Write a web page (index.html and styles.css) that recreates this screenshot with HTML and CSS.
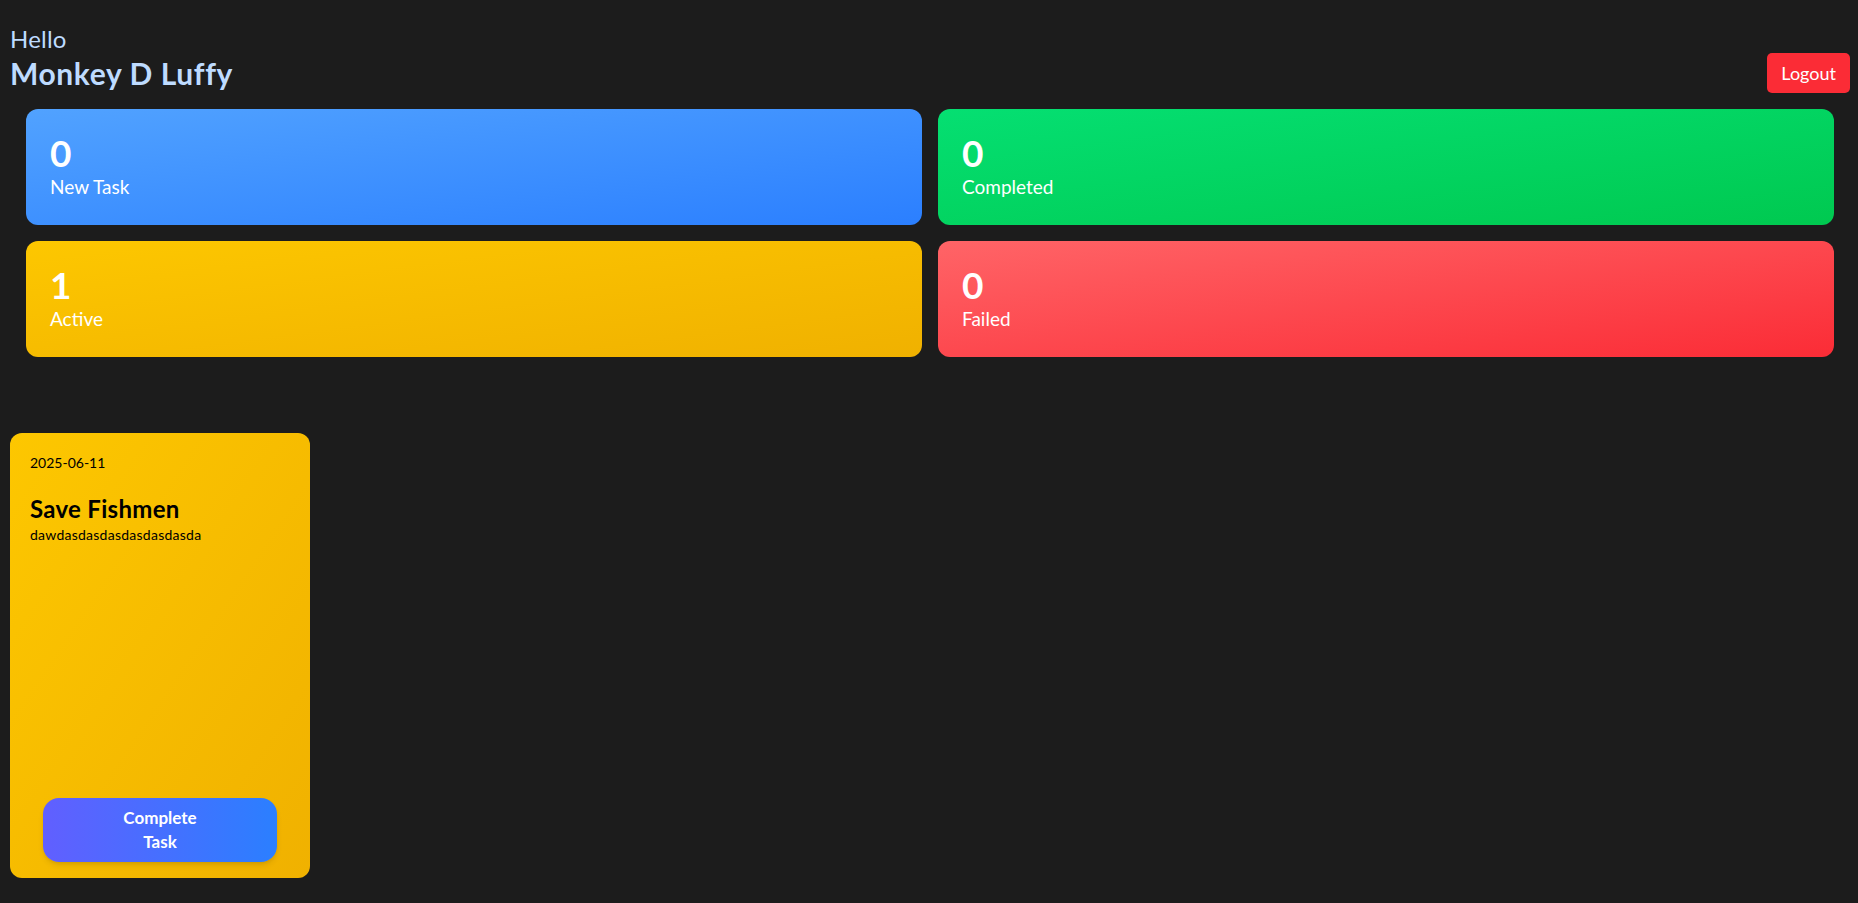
FILE: index.html
```html
<!DOCTYPE html>
<html lang="en">
<head>
<meta charset="utf-8">
<title>Employee Dashboard</title>
<link rel="stylesheet" href="styles.css">
</head>
<body>
<div class="page">
  <header class="header">
    <div class="greeting">
      <div class="hello">Hello</div>
      <h1 class="name">Monkey D Luffy</h1>
    </div>
    <button class="logout">Logout</button>
  </header>

  <section class="stats">
    <div class="stat stat-blue">
      <div class="stat-num">0</div>
      <div class="stat-label">New Task</div>
    </div>
    <div class="stat stat-green">
      <div class="stat-num">0</div>
      <div class="stat-label">Completed</div>
    </div>
    <div class="stat stat-yellow">
      <div class="stat-num">1</div>
      <div class="stat-label">Active</div>
    </div>
    <div class="stat stat-red">
      <div class="stat-num">0</div>
      <div class="stat-label">Failed</div>
    </div>
  </section>

  <section class="tasks">
    <article class="task">
      <div class="task-date">2025-06-11</div>
      <h2 class="task-title">Save Fishmen</h2>
      <p class="task-desc">dawdasdasdasdasdasdasda</p>
      <button class="task-btn"><span class="task-btn-text">Complete Task</span></button>
    </article>
  </section>
</div>
</body>
</html>
```
FILE: styles.css
```css
* { box-sizing: border-box; }
html, body { margin: 0; padding: 0; }
body {
  background: #1c1c1c;
  font-family: "Lato", "Open Sans", sans-serif;
  color: #fff;
  height: 903px;
  overflow: hidden;
}
.page {
  padding: 23px 8px 0 10px;
}
.header {
  display: flex;
  justify-content: space-between;
  align-items: flex-end;
}
.greeting { padding-bottom: 2px; }
.hello {
  font-size: 24px;
  line-height: 32px;
  color: #bedbff;
  letter-spacing: 0.2px;
}
.name {
  margin: 0;
  font-size: 30px;
  line-height: 36px;
  font-weight: 700;
  color: #bedbff;
  letter-spacing: 0.6px;
}
.logout {
  background: #fb2c36;
  color: #fff;
  border: 0;
  border-radius: 5px;
  font-family: inherit;
  font-size: 18px;
  line-height: 28px;
  padding: 6px 14px;
}
.stats {
  margin: 16px 16px 0 16px;
  display: grid;
  grid-template-columns: 1fr 1fr;
  gap: 16px;
}
.stat {
  border-radius: 12px;
  padding: 24px;
}
.stat-blue { background: linear-gradient(to bottom right, #51a2ff, #2b7fff); }
.stat-green { background: linear-gradient(to bottom right, #05df72, #00c950); }
.stat-yellow { background: linear-gradient(to bottom right, #fdc700, #f0b100); }
.stat-red { background: linear-gradient(to bottom right, #ff6467, #fb2c36); }
.stat-num {
  font-size: 37px;
  line-height: 40px;
  font-weight: 700;
}
.stat-label {
  font-size: 19px;
  line-height: 28px;
}
.tasks {
  margin-top: 76px;
  display: flex;
  gap: 20px;
}
.task {
  width: 300px;
  height: 445px;
  flex-shrink: 0;
  border-radius: 12px;
  padding: 20px 20px 16px;
  background: linear-gradient(to bottom right, #fdc700, #f0b100);
  color: #000;
  display: flex;
  flex-direction: column;
}
.task-date {
  font-size: 14px;
  line-height: 20px;
}
.task-title {
  margin: 20px 0 0;
  font-size: 24px;
  line-height: 32px;
  font-weight: 700;
  letter-spacing: 0.3px;
}
.task-desc {
  margin: 0;
  font-size: 14px;
  line-height: 20px;
  letter-spacing: 0.25px;
}
.task-btn {
  margin-top: auto;
  align-self: center;
  width: 90%;
  border: 0;
  border-radius: 16px;
  padding: 8px 0;
  background: linear-gradient(to right, #615fff, #2b7fff);
  color: #fff;
  font-family: inherit;
  font-size: 17px;
  line-height: 24px;
  font-weight: 700;
  box-shadow: 0 4px 6px -1px rgba(0,0,0,0.1), 0 2px 4px -2px rgba(0,0,0,0.1);
  display: flex;
  justify-content: center;
}
.task-btn-text {
  width: min-content;
  text-align: center;
}
```
